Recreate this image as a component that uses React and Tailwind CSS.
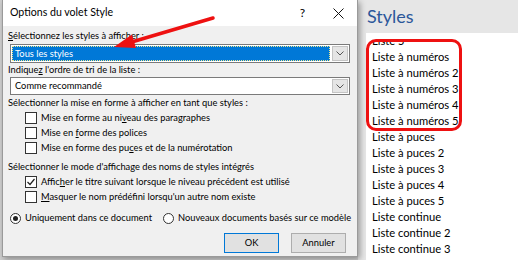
import React from 'react';

const font = { fontFamily: 'Lato, "Noto Sans", sans-serif' };

function Select({ value, focused, h }) {
  return (
    <div className={`mx-[7px] ${h} shrink-0 flex border border-[#7a7a7a] bg-white`}>
      <div className="flex-1 p-[1px]">
        {focused ? (
          <div className="h-full flex items-center bg-[#0078d7] border border-dotted border-[#f0e68c] text-white pl-[2px]">
            {value}
          </div>
        ) : (
          <div className="h-full flex items-center pl-[3px]">{value}</div>
        )}
      </div>
      <div className="w-[16px] m-[1px] bg-[#e5e5e5] border border-[#c4c4c4] flex items-center justify-center">
        <svg width="8" height="5" viewBox="0 0 8 5">
          <path d="M0.5 0.5 L4 4 L7.5 0.5" fill="none" stroke="#555" strokeWidth="1" />
        </svg>
      </div>
    </div>
  );
}

function Check({ checked, children }) {
  return (
    <div className="flex items-center h-[15px] shrink-0 pl-[22px] gap-[4px] whitespace-nowrap">
      <div className="w-[12px] h-[12px] shrink-0 border border-[#333] bg-white flex items-center justify-center">
        {checked && (
          <svg width="10" height="10" viewBox="0 0 10 10">
            <path d="M1.5 5 L4 7.5 L8.5 2" fill="none" stroke="#222" strokeWidth="1.2" />
          </svg>
        )}
      </div>
      <span>{children}</span>
    </div>
  );
}

function Radio({ checked, children, className = '' }) {
  return (
    <div className={`flex items-center gap-[4px] whitespace-nowrap ${className}`}>
      <div className="w-[11px] h-[11px] shrink-0 rounded-full border border-[#333] bg-white flex items-center justify-center">
        {checked && <div className="w-[5px] h-[5px] rounded-full bg-[#222]" />}
      </div>
      <span>{children}</span>
    </div>
  );
}

const styles = [
  'Liste 5',
  'Liste à numéros',
  'Liste à numéros 2',
  'Liste à numéros 3',
  'Liste à numéros 4',
  'Liste à numéros 5',
  'Liste à puces',
  'Liste à puces 2',
  'Liste à puces 3',
  'Liste à puces 4',
  'Liste à puces 5',
  'Liste continue',
  'Liste continue 2',
  'Liste continue 3',
];

export default function App() {
  return (
    <div className="relative w-[518px] h-[260px] overflow-hidden flex bg-[#cfcfcf] text-black" style={font}>
      {/* Dialog */}
      <div className="relative z-10 w-[356px] h-[257px] ml-[2px] border-x border-b border-[#9a9a9a] bg-[#f0f0f0] flex flex-col text-[9.3px] shadow-[2px_2px_6px_rgba(0,0,0,0.35)]">
        <div className="h-[26px] shrink-0 bg-white flex items-center pl-[7px] pr-[13px] text-[10.6px]">
          <span className="flex-1">Options du volet Style</span>
          <span className="mr-[28px] text-[12px]">?</span>
          <svg width="11" height="11" viewBox="0 0 11 11">
            <path d="M0.5 0.5 L10.5 10.5 M10.5 0.5 L0.5 10.5" stroke="#111" strokeWidth="1" />
          </svg>
        </div>

        <div className="pl-[5px] mt-[2px] h-[16px] shrink-0 flex items-center">
          <span><u>S</u>électionnez les styles à afficher :</span>
        </div>
        <Select value="Tous les styles" focused h="h-[19px]" />

        <div className="pl-[5px] h-[14px] shrink-0 flex items-center">
          <span>Indique<u>z</u> l'ordre de tri de la liste :</span>
        </div>
        <Select value="Comme recommandé" h="h-[18px]" />

        <div className="pl-[5px] h-[15px] shrink-0 flex items-center">
          <span>Sélectionner la mise en forme à afficher en tant que styles :</span>
        </div>
        <Check>Mise en forme au ni<u>v</u>eau des paragraphes</Check>
        <Check>Mise en <u>f</u>orme des polices</Check>
        <Check>Mise en forme des pu<u>c</u>es et de la numérotation</Check>

        <div className="pl-[5px] mt-[4px] h-[15px] shrink-0 flex items-center">
          <span>Sélectionner le mode d'affichage des noms de styles intégrés</span>
        </div>
        <Check checked>Affic<u>h</u>er le titre suivant lorsque le niveau précédent est utilisé</Check>
        <Check><u>M</u>asquer le nom prédéfini lorsqu'un autre nom existe</Check>

        <div className="flex items-center pl-[7px] mt-[7px] h-[14px] shrink-0">
          <Radio checked className="w-[153px]">Uniquement dans ce document</Radio>
          <Radio>Nouveaux documents basés sur ce modèle</Radio>
        </div>

        <div className="flex justify-end gap-[12px] pr-[11px] mt-[8px] shrink-0">
          <button className="w-[55px] h-[20px] bg-[#e1e1e1] border border-[#0078d7]">OK</button>
          <button className="w-[55px] h-[20px] bg-[#e1e1e1] border border-[#adadad]">Annuler</button>
        </div>
      </div>

      {/* Styles pane */}
      <div className="flex-1 flex flex-col bg-[#e6e6e6]">
        <div className="h-[33px] shrink-0 flex items-center pl-[9px] text-[18px] text-[#2b579a]">Styles</div>
        <div className="flex-1 ml-[8px] bg-white pt-[7px] flex flex-col text-[11.2px]">
          <div className="flex-1 overflow-hidden">
            <div className="-mt-[7px] pl-[6px]">
              {styles.map((s) => (
                <div key={s} className="h-[16px] flex items-center">{s}</div>
              ))}
            </div>
          </div>
        </div>
      </div>

      {/* Annotations */}
      <div className="absolute z-20 left-[366px] top-[39px] w-[96px] h-[92px] border-[3.5px] border-[#ee1111] rounded-[10px]" />
      <svg className="absolute z-20 left-0 top-0" width="518" height="260" viewBox="0 0 518 260">
        <line x1="213" y1="18" x2="130" y2="42.5" stroke="#ee1111" strokeWidth="3.5" strokeLinecap="round" />
        <polygon points="114,47 132,34.5 136,48" fill="#ee1111" />
      </svg>
    </div>
  );
}
